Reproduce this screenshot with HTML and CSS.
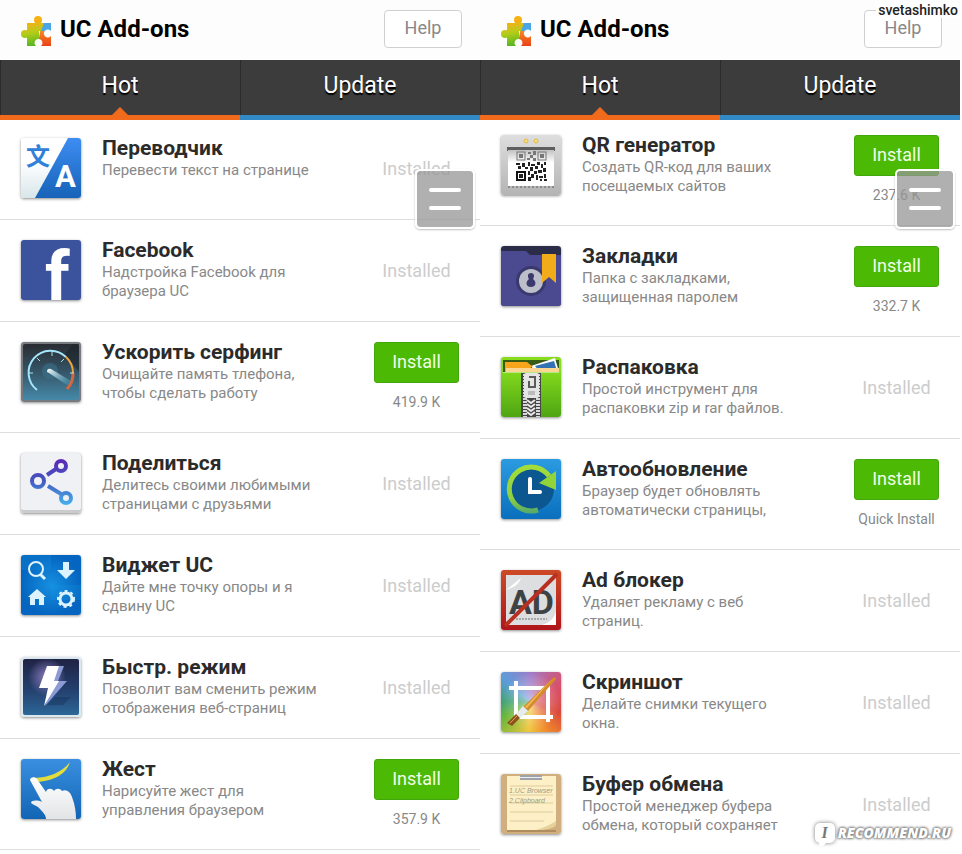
FILE: index.html
```html
<!DOCTYPE html>
<html lang="ru">
<head>
    <meta charset="UTF-8">
    <meta name="viewport" content="width=device-width, initial-scale=1.0">
    <title>UC Add-ons</title>
    <link rel="stylesheet" href="styles.css">
</head>
<body>

<main class="screens">
    <section class="screen">
        <header class="header">
            <svg class="logo" viewBox="0 0 30 30">
                <defs>
                    <linearGradient id="pz1" gradientUnits="userSpaceOnUse" x1="8" y1="0" x2="14" y2="30"><stop offset="0.2" stop-color="#f9b012"/><stop offset="0.55" stop-color="#b5cc1c"/><stop offset="1" stop-color="#4db51f"/></linearGradient>
                    <linearGradient id="pz2" x1="0" y1="0" x2="0" y2="1"><stop offset="0" stop-color="#f9871f"/><stop offset="1" stop-color="#e8401a"/></linearGradient>
                </defs>
                <g fill="url(#pz1)">
                    <circle cx="17" cy="4" r="4"/>
                    <circle cx="4" cy="18" r="4"/>
                    <path d="M6 7h24v8H18v15H6z"/>
                </g>
                <path fill="#4aa5e4" d="M23 7h7v9l-10-1z"/>
                <path fill="url(#pz2)" d="M19 15h11v15H17z"/>
                <path fill="#fdfdfd" d="M30 15a4 4 0 1 0 0 5zM15 30a4 4 0 1 1 5 0z"/>
            </svg>
            <h1 class="header-title">UC Add-ons</h1>
            <button class="help" type="button">Help</button>
        </header>
        <nav class="tabs">
            <a class="tab active" href="#hot">Hot</a>
            <a class="tab" href="#update">Update</a>
        </nav>
        <ul class="list list-top">
            <li class="row">
                <svg class="icon" viewBox="0 0 60 60">
                    <defs>
                        <linearGradient id="tr1" x1="0" y1="0" x2="0" y2="1"><stop offset="0" stop-color="#3d8df2"/><stop offset="1" stop-color="#1763b8"/></linearGradient>
                        <linearGradient id="tr2" x1="0" y1="0" x2="0" y2="1"><stop offset="0.4" stop-color="#fff"/><stop offset="1" stop-color="#d8e6ea"/></linearGradient>
                    </defs>
                    <rect width="60" height="60" fill="url(#tr2)"/>
                    <path fill="url(#tr1)" d="M47 0h13v60H14z"/>
                    <text class="glyph-cjk" x="5" y="27" font-size="24" fill="#2f80d8">文</text>
                    <text class="glyph" x="34" y="49" font-size="31" fill="#fff">A</text>
                </svg>
                <div class="info">
                    <h2 class="name">Переводчик</h2>
                    <p class="desc">Перевести текст на странице</p>
                </div>
                <div class="action"><span class="installed">Installed</span></div>
            </li>
            <li class="row">
                <svg class="icon facebook" viewBox="0 0 60 60">
                    <text class="glyph" x="24" y="60" font-size="69" fill="#fff">f</text>
                </svg>
                <div class="info">
                    <h2 class="name">Facebook</h2>
                    <p class="desc">Надстройка Facebook для<br>браузера UC</p>
                </div>
                <div class="action"><span class="installed">Installed</span></div>
            </li>
            <li class="row">
                <svg class="icon" viewBox="0 0 60 60">
                    <defs>
                        <linearGradient id="sp1" x1="0" y1="0" x2="0" y2="1"><stop offset="0" stop-color="#292c31"/><stop offset="0.5" stop-color="#355668"/><stop offset="1" stop-color="#4589a9"/></linearGradient>
                        <linearGradient id="sp2" x1="0" y1="0" x2="1" y2="0.7"><stop offset="0" stop-color="#fff"/><stop offset="1" stop-color="#4ba4bf" stop-opacity="0.4"/></linearGradient>
                    </defs>
                    <rect width="60" height="60" fill="#777b7f"/>
                    <rect x="2" y="2" width="56" height="56" rx="2" fill="url(#sp1)"/>
                    <path fill="#182026" opacity="0.5" d="M44 12l8-10h6v28z"/>
                    <circle cx="29" cy="29" r="8" fill="#3c7188" opacity="0.6"/>
                    <path fill="none" stroke="#a4e5fa" stroke-width="2" d="M16 48A22 22 0 1 1 45 15"/>
                    <path fill="none" stroke="#f1a33c" stroke-width="2" d="M45 15A22 22 0 0 1 52 31"/>
                    <path fill="none" stroke="#d9653c" stroke-width="3" d="M52 31A22 22 0 0 1 46 47"/>
                    <path stroke="#a4e5fa" stroke-width="1" d="M8 31h4M16 16l3 3M31 9v5M43 17l-3 3M49 31h4"/>
                    <path fill="url(#sp2)" d="M26 30q0-4 4-3l20 12q-1 3-4 4L28 31z"/>
                </svg>
                <div class="info">
                    <h2 class="name">Ускорить серфинг</h2>
                    <p class="desc">Очищайте память тлефона,<br>чтобы сделать работу</p>
                </div>
                <div class="action">
                    <button class="install" type="button">Install</button>
                    <span class="size">419.9 K</span>
                </div>
            </li>
            <li class="row">
                <svg class="icon" viewBox="0 0 60 60">
                    <defs>
                        <linearGradient id="sh1" gradientUnits="userSpaceOnUse" x1="0" y1="7" x2="0" y2="52"><stop offset="0" stop-color="#5a2ab8"/><stop offset="0.45" stop-color="#4557c0"/><stop offset="1" stop-color="#45b2ee"/></linearGradient>
                    </defs>
                    <rect width="60" height="60" fill="#c9cbcd"/>
                    <rect width="60" height="57" rx="2" fill="#f0f1f4"/>
                    <g fill="none" stroke="url(#sh1)" stroke-width="4">
                        <circle cx="40" cy="13" r="5"/>
                        <circle cx="17" cy="28" r="6"/>
                        <circle cx="45" cy="45" r="5"/>
                        <path d="M26 22l9-6M27 33l13 8"/>
                    </g>
                </svg>
                <div class="info">
                    <h2 class="name">Поделиться</h2>
                    <p class="desc">Делитесь своими любимыми<br>страницами с друзьями</p>
                </div>
                <div class="action"><span class="installed">Installed</span></div>
            </li>
            <li class="row">
                <svg class="icon" viewBox="0 0 60 60">
                    <defs>
                        <radialGradient id="wd1"><stop offset="0" stop-color="#168fe0"/><stop offset="1" stop-color="#0565c0"/></radialGradient>
                    </defs>
                    <rect width="60" height="60" fill="url(#wd1)"/>
                    <path fill="#1ba0e6" opacity="0.2" d="M0 0h30v15H0zM30 30h30v15H30z"/>
                    <g fill="none" stroke="#dcf3ff">
                        <circle cx="15" cy="14" r="7" stroke-width="2"/>
                        <path stroke-width="3" d="M19 19l5 5"/>
                        <circle cx="45" cy="44" r="6" stroke-width="3"/>
                        <circle cx="45" cy="44" r="8" stroke-width="2" stroke-dasharray="3 3"/>
                    </g>
                    <path fill="#dcf3ff" d="M42 7h6v8h6l-9 9-9-9h6zM16 34l9 8h-2v8h-5v-6h-4v6H9v-8H7z"/>
                </svg>
                <div class="info">
                    <h2 class="name">Виджет UC</h2>
                    <p class="desc">Дайте мне точку опоры и я<br>сдвину UC</p>
                </div>
                <div class="action"><span class="installed">Installed</span></div>
            </li>
            <li class="row">
                <svg class="icon" viewBox="0 0 60 60">
                    <defs>
                        <linearGradient id="fm1" x1="0" y1="0" x2="0" y2="1"><stop offset="0" stop-color="#1f2344"/><stop offset="0.55" stop-color="#24406e"/><stop offset="1" stop-color="#2c6798"/></linearGradient>
                        <radialGradient id="fm2"><stop offset="0" stop-color="#8d7dc0"/><stop offset="1" stop-color="#8d7dc0" stop-opacity="0"/></radialGradient>
                    </defs>
                    <rect width="60" height="60" fill="#dbe8f0"/>
                    <rect x="2" y="2" width="56" height="56" rx="2" fill="url(#fm1)"/>
                    <circle cx="26" cy="20" r="19" fill="url(#fm2)"/>
                    <path fill="#142c55" opacity="0.4" d="M34 40h16l-8 8H26z"/>
                    <path fill="#8c9ad6" d="M36 9h7l-6 15h9L24 49z"/>
                    <path fill="#fff" d="M26 9h12l-5 15h5L23 49l4-18h-9z"/>
                </svg>
                <div class="info">
                    <h2 class="name">Быстр. режим</h2>
                    <p class="desc">Позволит вам сменить режим<br>отображения веб-страниц</p>
                </div>
                <div class="action"><span class="installed">Installed</span></div>
            </li>
            <li class="row">
                <svg class="icon" viewBox="0 0 60 60">
                    <defs>
                        <linearGradient id="gs1" x1="0" y1="0" x2="0" y2="1"><stop offset="0" stop-color="#3a8fe0"/><stop offset="1" stop-color="#1265b4"/></linearGradient>
                        <linearGradient id="gs2" x1="0" y1="0" x2="0" y2="1"><stop offset="0" stop-color="#fff"/><stop offset="1" stop-color="#e2e4e6"/></linearGradient>
                    </defs>
                    <rect width="60" height="60" fill="url(#gs1)"/>
                    <path fill="#e2dd3d" d="M13 19q24-1 36-16-5 17-32 20z"/>
                    <path fill="url(#gs2)" d="M9 21c0-3 5-4 7-1l9 13c1-4 6-4 8-1 2-3 6-3 8 0 4-2 8 0 10 6 3 8 4 15 4 22H25c0-4-3-7-8-12-3-2-6-3-7-4 0-3 7-3 11-1z"/>
                </svg>
                <div class="info">
                    <h2 class="name">Жест</h2>
                    <p class="desc">Нарисуйте жест для<br>управления браузером</p>
                </div>
                <div class="action">
                    <button class="install" type="button">Install</button>
                    <span class="size">357.9 K</span>
                </div>
            </li>
        </ul>
        <button class="menu" type="button" aria-label="Menu"><span class="bar"></span><span class="bar"></span></button>
    </section>

    <section class="screen">
        <header class="header">
            <svg class="logo" viewBox="0 0 30 30">
                <g fill="url(#pz1)">
                    <circle cx="17" cy="4" r="4"/>
                    <circle cx="4" cy="18" r="4"/>
                    <path d="M6 7h24v8H18v15H6z"/>
                </g>
                <path fill="#4aa5e4" d="M23 7h7v9l-10-1z"/>
                <path fill="url(#pz2)" d="M19 15h11v15H17z"/>
                <path fill="#fdfdfd" d="M30 15a4 4 0 1 0 0 5zM15 30a4 4 0 1 1 5 0z"/>
            </svg>
            <h1 class="header-title">UC Add-ons</h1>
            <button class="help" type="button">Help</button>
        </header>
        <nav class="tabs">
            <a class="tab active" href="#hot">Hot</a>
            <a class="tab" href="#update">Update</a>
        </nav>
        <ul class="list list-scrolled">
            <li class="row">
                <svg class="icon" viewBox="0 0 60 60">
                    <defs>
                        <linearGradient id="qr1" x1="0" y1="0" x2="0" y2="1"><stop offset="0" stop-color="#dedede"/><stop offset="1" stop-color="#b4b4b4"/></linearGradient>
                        <linearGradient id="qr2" x1="0" y1="0" x2="0" y2="1"><stop offset="0" stop-color="#c2c2c2"/><stop offset="0.35" stop-color="#fff"/></linearGradient>
                    </defs>
                    <rect width="60" height="60" fill="url(#qr1)"/>
                    <circle cx="25" cy="6" r="2" fill="#f7e08a" stroke="#e5b93c"/>
                    <circle cx="35" cy="6" r="2" fill="#f7e08a" stroke="#e5b93c"/>
                    <rect x="6" y="12" width="48" height="4" fill="#5e5e5e"/>
                    <rect x="7" y="15" width="46" height="36" fill="url(#qr2)"/>
                    <path stroke="#8a8a8a" stroke-width="2" stroke-dasharray="2 2" d="M7 52h46"/>
                    <g fill="none" stroke="#777" stroke-width="1">
                        <rect x="16" y="17" width="8" height="8"/>
                        <rect x="37" y="17" width="8" height="8"/>
                    </g>
                    <path fill="#777" d="M18 19h4v4h-4zM39 19h4v4h-4zM27 17h3v2h-3zM32 16h3v4h-3zM29 20h3v3h-3zM26 23h3v2h-3zM32 23h3v3h-3z"/>
                    <rect x="16" y="37" width="8" height="8" fill="none" stroke="#111" stroke-width="2"/>
                    <path fill="#222" d="M18 39h4v4h-4zM15 28h4v2h-4zM17 31h3v3h-3zM21 28h3v4h-3zM24 32h3v2h-3zM27 27h2v4h-2zM30 29h4v2h-4zM29 32h3v4h-3zM34 31h3v3h-3zM36 27h3v3h-3zM40 29h2v4h-2zM43 27h2v3h-2zM42 33h3v4h-3zM37 35h4v3h-4zM33 36h3v3h-3zM27 36h2v4h-2zM30 39h3v4h-3zM27 42h3v4h-3zM35 40h2v5h-2zM38 41h4v2h-4zM43 39h2v4h-2zM39 44h2v2h-2zM43 44h3v2h-3z"/>
                </svg>
                <div class="info">
                    <h2 class="name">QR генератор</h2>
                    <p class="desc">Создать QR-код для ваших<br>посещаемых сайтов</p>
                </div>
                <div class="action">
                    <button class="install" type="button">Install</button>
                    <span class="size">237.6 K</span>
                </div>
            </li>
            <li class="row">
                <svg class="icon" viewBox="0 0 60 60">
                    <rect width="60" height="60" fill="#2b2c48"/>
                    <path fill="#4b4990" d="M0 5h25l4 4h31v51H0z"/>
                    <circle cx="30" cy="35" r="15" fill="#39386f"/>
                    <circle cx="30" cy="35" r="12" fill="#bcbfc9"/>
                    <path fill="#3b3a6c" d="M30 27c3 0 4 3 2 6 4 3 3 8-2 8s-6-5-2-8c-2-3-1-6 2-6z"/>
                    <path fill="#f3ac19" d="M41 8h14v29l-7-6-7 6z"/>
                </svg>
                <div class="info">
                    <h2 class="name">Закладки</h2>
                    <p class="desc">Папка с закладками,<br>защищенная паролем</p>
                </div>
                <div class="action">
                    <button class="install" type="button">Install</button>
                    <span class="size">332.7 K</span>
                </div>
            </li>
            <li class="row">
                <svg class="icon" viewBox="0 0 60 60">
                    <defs>
                        <linearGradient id="zp1" x1="0" y1="0" x2="0" y2="1"><stop offset="0.2" stop-color="#86dc1d"/><stop offset="1" stop-color="#4ea512"/></linearGradient>
                    </defs>
                    <rect width="60" height="60" fill="url(#zp1)"/>
                    <path fill="#355b14" d="M2 3h56v12H2z"/>
                    <path fill="#fff" d="M30 9l24-8 4 14H34z"/>
                    <path fill="#3471b4" d="M34 9l19-5 3 10H38z"/>
                    <path fill="#f9a51c" d="M4 5h22l6 5h-2v5H4z"/>
                    <path fill="#fbd592" d="M5 11h53v4H5z"/>
                    <path fill="#b9e785" d="M2 15h56v1H2z"/>
                    <path fill="#454545" d="M20 16h20v44H20z"/>
                    <path stroke="#d8d8d8" stroke-width="4" stroke-dasharray="2 1" d="M24 17v43M37 17v43"/>
                    <path fill="none" stroke="#e8e8e8" stroke-width="2" d="M26 43l4 3 4-3M26 47l4 3 4-3M26 51l4 3 4-3M26 55l4 3 4-3"/>
                    <rect x="23" y="16" width="15" height="25" rx="2" fill="#e4e4e4"/>
                    <path fill="none" stroke="#5a5a5a" stroke-width="2" d="M28 20h6v10h-6v-6"/>
                    <path fill="#bbb" d="M27 34h7v4h-7z"/>
                </svg>
                <div class="info">
                    <h2 class="name">Распаковка</h2>
                    <p class="desc">Простой инструмент для<br>распаковки zip и rar файлов.</p>
                </div>
                <div class="action"><span class="installed">Installed</span></div>
            </li>
            <li class="row">
                <svg class="icon" viewBox="0 0 60 60">
                    <defs>
                        <linearGradient id="up1" x1="0" y1="0" x2="0" y2="1"><stop offset="0" stop-color="#2b9be0"/><stop offset="1" stop-color="#0a6fbd"/></linearGradient>
                        <linearGradient id="up2" gradientUnits="userSpaceOnUse" x1="0" y1="5" x2="0" y2="54"><stop offset="0" stop-color="#a5de3a"/><stop offset="0.7" stop-color="#8fcf40"/><stop offset="1" stop-color="#55a96a"/></linearGradient>
                    </defs>
                    <rect width="60" height="60" fill="url(#up1)"/>
                    <circle cx="31" cy="30" r="22" fill="#0c5790"/>
                    <path fill="none" stroke="url(#up2)" stroke-width="5" d="M37 51A22 22 0 1 1 48 17"/>
                    <path fill="#91d33a" d="M55 12v19l-17-7z"/>
                    <path fill="none" stroke="#fff" stroke-width="4" stroke-linecap="round" d="M29 20v13h10"/>
                </svg>
                <div class="info">
                    <h2 class="name">Автообновление</h2>
                    <p class="desc">Браузер будет обновлять<br>автоматически страницы,</p>
                </div>
                <div class="action">
                    <button class="install" type="button">Install</button>
                    <span class="size">Quick Install</span>
                </div>
            </li>
            <li class="row">
                <svg class="icon" viewBox="0 0 60 60">
                    <defs>
                        <linearGradient id="ad1" x1="0" y1="0" x2="0" y2="1"><stop offset="0" stop-color="#cc4a26"/><stop offset="1" stop-color="#b0161a"/></linearGradient>
                    </defs>
                    <rect width="60" height="60" fill="url(#ad1)"/>
                    <rect x="5" y="5" width="50" height="50" fill="#dcdee0"/>
                    <path fill="#fff" d="M5 20L20 8q-2 8-15 12zM55 42q-3 10-14 13h14z"/>
                    <text class="glyph" x="8" y="44" font-size="34" fill="#3d4345">AD</text>
                    <path stroke="#a8a8a8" stroke-width="2" stroke-dasharray="2 1" d="M15 49h31"/>
                    <path fill="none" stroke="#b92f20" stroke-width="4" d="M4 56L56 4"/>
                </svg>
                <div class="info">
                    <h2 class="name">Ad блокер</h2>
                    <p class="desc">Удаляет рекламу с веб<br>страниц.</p>
                </div>
                <div class="action"><span class="installed">Installed</span></div>
            </li>
            <li class="row">
                <div class="icon rainbow">
                    <svg class="rainbow-art" viewBox="0 0 60 60">
                        <path fill="none" stroke="#fff" stroke-width="4" d="M8 16h39v34M15 9v36h37"/>
                        <path fill="#d58c28" d="M52 6q3-2 3 1L27 39l-5-4z"/>
                        <path fill="#f2ba58" d="M52 6L24 35l2 1z"/>
                        <path fill="#e6ebed" d="M22 34l5 5-8 7-4-4z"/>
                        <path fill="#8d531f" d="M15 42l4 4-8 8-5-3z"/>
                        <path stroke="#e0a04a" d="M16 44l-7 7"/>
                    </svg>
                </div>
                <div class="info">
                    <h2 class="name">Скриншот</h2>
                    <p class="desc">Делайте снимки текущего<br>окна.</p>
                </div>
                <div class="action"><span class="installed">Installed</span></div>
            </li>
            <li class="row">
                <svg class="icon" viewBox="0 0 60 60">
                    <rect width="60" height="60" fill="#d1ae7d"/>
                    <path fill="#b08d5e" d="M6 56h49v2H6z"/>
                    <path fill="#fdf0c6" d="M6 2h49v45q-3 8-16 9H6z"/>
                    <path fill="#e5d29b" d="M55 47q-7 5-20 9 17 0 20-5z"/>
                    <path fill="#a0a2aa" d="M19 1h22v5H19z"/>
                    <path fill="#eceef2" d="M19 3h22v1H19z"/>
                    <path stroke="#dccb9c" d="M9 12h43M9 21h43M9 29h43M9 38h43M9 47h34"/>
                    <text class="glyph-note" x="8" y="19" font-size="7">1.UC Browser</text>
                    <text class="glyph-note" x="8" y="29" font-size="7">2.Clipboard</text>
                </svg>
                <div class="info">
                    <h2 class="name">Буфер обмена</h2>
                    <p class="desc">Простой менеджер буфера<br>обмена, который сохраняет</p>
                </div>
                <div class="action"><span class="installed">Installed</span></div>
            </li>
        </ul>
        <button class="menu" type="button" aria-label="Menu"><span class="bar"></span><span class="bar"></span></button>
    </section>

    <span class="author">svetashimko</span>
    <div class="watermark"><span class="bubble">I</span>RECOMMEND.RU</div>
</main>

</body>
</html>
```
FILE: styles.css
```css
body {
    margin: 0;
    background: #fff;
    font-family: Roboto, "Liberation Sans", sans-serif;
}
h1, h2, p, ul {
    margin: 0;
    padding: 0;
}
.screens {
    position: relative;
    display: grid;
    grid-template-columns: 1fr 1fr;
    height: 100vh;
    padding-right: 2px;
    overflow: hidden;
}
.screen {
    position: relative;
    min-width: 0;
}
.header {
    display: flex;
    align-items: center;
    height: 60px;
    padding: 0 18px 0 21px;
    box-sizing: border-box;
    background: #fdfdfd;
}
.logo {
    width: 30px;
    height: 30px;
    margin: 2px 9px 0 0;
}
.header-title {
    flex: 1;
    padding-bottom: 2px;
    font-size: 24px;
    line-height: 32px;
    color: #000;
}
.help {
    width: 78px;
    height: 38px;
    margin-bottom: 2px;
    padding: 0 0 4px;
    border: 1px solid #d0d0d0;
    border-radius: 4px;
    background: #fff;
    font-family: inherit;
    font-size: 18px;
    color: #888;
}
.tabs {
    position: relative;
    z-index: 1;
    display: flex;
    background: #3c3c3c;
}
.tab {
    position: relative;
    flex: 1;
    height: 55px;
    border-bottom: 5px solid #318ac6;
    box-shadow: inset 1px 0 #2b2b2b;
    font-size: 23px;
    line-height: 52px;
    text-align: center;
    text-decoration: none;
    text-shadow: 0 2px 1px #000;
    color: #fff;
}
.tab.active {
    border-bottom-color: #f26a1b;
}
.tab.active::after {
    content: "";
    position: absolute;
    left: 50%;
    bottom: 0;
    margin-left: -8px;
    border: 8px solid transparent;
    border-top: 0;
    border-bottom-color: #f26a1b;
}
.list {
    list-style: none;
}
/* lists are scrolled a little under the tabs */
.list-top {
    margin-top: -2px;
}
.list-scrolled {
    margin-top: -5px;
}
.row {
    display: flex;
    align-items: flex-start;
    padding: 20px 21px 21px;
    border-bottom: 1px solid #dedede;
}
.icon {
    flex: none;
    width: 60px;
    height: 60px;
    border-radius: 3px;
    box-shadow: 0 1px 3px rgba(0, 0, 0, 0.45);
}
.facebook {
    background: #3a539c;
    overflow: visible;
}
.glyph {
    font-family: Roboto, sans-serif;
    font-weight: bold;
}
.glyph-cjk {
    font-family: "Noto Sans CJK SC", sans-serif;
    font-weight: bold;
}
.glyph-note {
    font-family: "Liberation Sans", sans-serif;
    font-style: italic;
    fill: #a09a80;
}
.rainbow {
    background: radial-gradient(circle, rgba(255, 255, 255, 0.5), rgba(255, 255, 255, 0) 70%), conic-gradient(#a07ac8, #d8506a 60deg, #d8483c 110deg, #f08a2c 150deg, #f0c63c 185deg, #6cb83c 240deg, #3ca070 270deg, #5c9cd8 310deg, #a07ac8);
}
.rainbow-art {
    display: block;
}
.info {
    flex: 1;
    margin: -2px 0 -1px 21px;
}
.name {
    font-size: 21px;
    line-height: 25px;
    color: #2b2b2b;
}
.desc {
    font-size: 15px;
    line-height: 19px;
    color: #888;
    white-space: nowrap;
}
.action {
    display: flex;
    flex-direction: column;
    align-items: center;
    align-self: center;
    width: 85px;
}
.installed {
    padding-top: 2px;
    font-size: 18px;
    line-height: 20px;
    color: #ccc;
}
.install {
    width: 85px;
    height: 41px;
    padding: 0 0 2px;
    border: 1px solid #43a60a;
    border-radius: 3px;
    background: #4cba05;
    font-family: inherit;
    font-size: 18px;
    color: #f0ffe6;
}
.size {
    margin-top: 10px;
    font-size: 14px;
    line-height: 18px;
    color: #888;
    white-space: nowrap;
}
.menu {
    position: absolute;
    top: 169px;
    right: 5px;
    display: flex;
    flex-direction: column;
    align-items: center;
    justify-content: center;
    gap: 14px;
    width: 60px;
    height: 60px;
    padding: 0;
    border: 2px solid #fff;
    border-radius: 5px;
    background: rgba(150, 150, 150, 0.75);
    background-clip: padding-box;
    box-shadow: 0 1px 2px rgba(0, 0, 0, 0.25);
}
.bar {
    width: 32px;
    height: 4px;
    border-radius: 2px;
    background: #fff;
}
.author {
    position: absolute;
    top: 2px;
    right: 4px;
    padding-left: 2px;
    background: #fff;
    font-size: 14px;
    font-weight: 500;
    line-height: 16px;
    color: #222;
}
.watermark {
    position: absolute;
    right: 11px;
    bottom: 9px;
    display: flex;
    align-items: center;
    gap: 3px;
    font-family: "Open Sans", sans-serif;
    font-size: 14px;
    font-style: italic;
    font-weight: 800;
    line-height: 24px;
    color: #fff;
    text-shadow: 0 0 3px #777, 0 0 3px #777, 0 0 3px #888;
}
.bubble {
    position: relative;
    width: 20px;
    height: 20px;
    border-radius: 5px;
    background: #fff;
    box-shadow: 0 0 4px #777;
    font-family: "Liberation Serif", serif;
    font-size: 16px;
    line-height: 20px;
    text-align: center;
    text-shadow: none;
    color: #777;
}
.bubble::after {
    content: "";
    position: absolute;
    left: 4px;
    top: 19px;
    border: 4px solid transparent;
    border-top-color: #fff;
    border-left-color: #fff;
    border-bottom: 0;
}
```
